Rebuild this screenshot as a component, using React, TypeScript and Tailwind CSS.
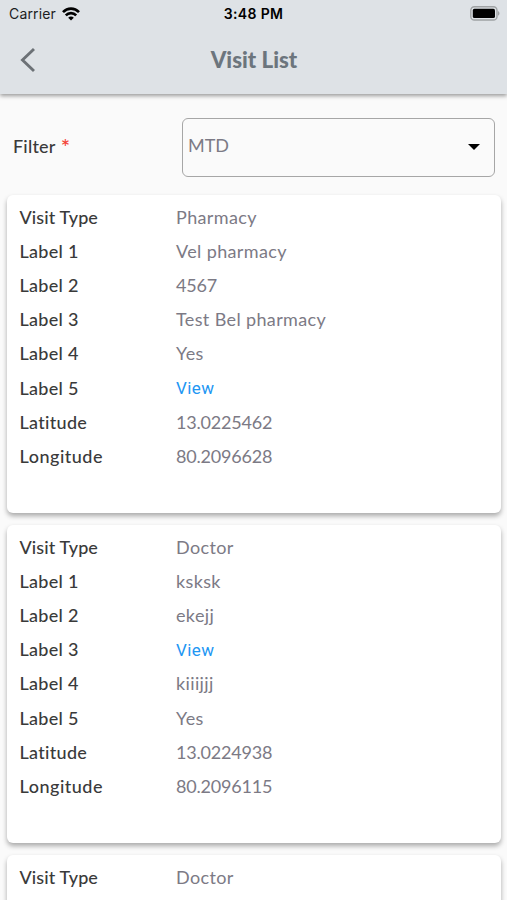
import { clsx } from 'clsx'
import type { JSX } from 'react'

interface VisitField {
  label: string
  value: string
  link?: boolean
}

interface Visit {
  id: number
  fields: readonly VisitField[]
}

const VISITS: readonly Visit[] = [
  {
    id: 1,
    fields: [
      { label: 'Visit Type', value: 'Pharmacy' },
      { label: 'Label 1', value: 'Vel pharmacy' },
      { label: 'Label 2', value: '4567' },
      { label: 'Label 3', value: 'Test Bel pharmacy' },
      { label: 'Label 4', value: 'Yes' },
      { label: 'Label 5', value: 'View', link: true },
      { label: 'Latitude', value: '13.0225462' },
      { label: 'Longitude', value: '80.2096628' },
    ],
  },
  {
    id: 2,
    fields: [
      { label: 'Visit Type', value: 'Doctor' },
      { label: 'Label 1', value: 'ksksk' },
      { label: 'Label 2', value: 'ekejj' },
      { label: 'Label 3', value: 'View', link: true },
      { label: 'Label 4', value: 'kiiijjj' },
      { label: 'Label 5', value: 'Yes' },
      { label: 'Latitude', value: '13.0224938' },
      { label: 'Longitude', value: '80.2096115' },
    ],
  },
  {
    id: 3,
    fields: [{ label: 'Visit Type', value: 'Doctor' }],
  },
]

export default function App(): JSX.Element {
  return (
    <div className="flex h-[900px] w-[507px] flex-col overflow-hidden bg-[#fafafa] font-['Lato',sans-serif]">
      <header className="z-10 h-[94px] shrink-0 bg-[#dee2e6] shadow-[0_2px_4px_rgba(0,0,0,0.38)]">
        <StatusBar />
        <NavBar />
      </header>
      <main className="flex flex-col">
        <FilterRow />
        <ul className="flex flex-col gap-3 pr-[6px] pl-[7px]">
          {VISITS.map((visit) => (
            <VisitCard key={visit.id} visit={visit} />
          ))}
        </ul>
      </main>
    </div>
  )
}

function StatusBar(): JSX.Element {
  return (
    <div className="grid h-[27px] grid-cols-[1fr_80px_1fr] items-center pr-[7px] pl-[9px] font-['Inter',sans-serif] text-black">
      <div className="flex items-center gap-[6px]">
        <span className="text-[14px] tracking-[0.15px] text-[#1c1d1e]">Carrier</span>
        <WifiIcon />
      </div>
      <span className="-ml-[2px] text-center text-[14px] font-semibold tracking-[0.35px] whitespace-nowrap">
        3:48 PM
      </span>
      <div className="flex justify-end">
        <BatteryIcon />
      </div>
    </div>
  )
}

function NavBar(): JSX.Element {
  return (
    <div className="grid h-[67px] grid-cols-[60px_1fr_60px] items-center">
      <button type="button" aria-label="Back" className="-mt-[2px] pl-[20px]">
        <svg width="16" height="26" viewBox="0 0 16 26" fill="none">
          <path d="M14 2 L2.5 13 L14 24" stroke="#6c7176" strokeWidth="2.9" />
        </svg>
      </button>
      <h1 className="-mt-[1px] pl-px text-center text-[22.3px] font-black text-[#6c757d]">Visit List</h1>
    </div>
  )
}

function FilterRow(): JSX.Element {
  return (
    <div className="flex h-[101px] items-start pt-[24px] pr-[12px] pl-[13px]">
      <div className="flex h-[56px] w-[169px] items-center text-[18px] font-medium tracking-[0.2px] text-[#3a3a3a]">
        Filter<span className="ml-[5px] pt-[2px] text-[22px] leading-none text-[#f44336]">*</span>
      </div>
      <button
        type="button"
        className="flex h-[59px] flex-1 items-center justify-between rounded-[6px] border border-[#a6a6a6] pr-[14px] pb-[5px] pl-[5px] text-[18px] text-[#7c7a85]"
      >
        MTD
        <svg width="12" height="6" viewBox="0 0 12 6" className="mt-[3px]">
          <path d="M0 0 H12 L6 6 Z" fill="#000" />
        </svg>
      </button>
    </div>
  )
}

interface VisitCardProps {
  visit: Visit
}

function VisitCard({ visit }: VisitCardProps): JSX.Element {
  return (
    <li className="h-[318px] shrink-0 rounded-[6px] bg-white pt-[5px] pl-[12.5px] shadow-[0_3px_5px_rgba(0,0,0,0.32)]">
      <dl>
        {visit.fields.map((field) => (
          <div key={field.label} className="flex h-[34.2px] items-center text-[18px]">
            <dt
              className={clsx(
                'w-[156.5px] font-medium text-[#3a3a3a]',
                field.label === 'Visit Type' && 'tracking-[0.1px]',
                field.label === 'Longitude' && 'tracking-[0.5px]',
                field.label !== 'Visit Type' && field.label !== 'Longitude' && 'tracking-[0.3px]',
              )}
            >
              {field.label}
            </dt>
            <dd
              className={clsx(
                field.link && "pt-[2px] font-['Roboto',sans-serif] text-[17px] tracking-[0.4px] text-[#2196f3]",
                !field.link && 'text-[#7c7a85]',
                !field.link && (/^\d/.test(field.value) ? 'tracking-[-0.2px]' : 'tracking-[0.37px]'),
              )}
            >
              {field.value}
            </dd>
          </div>
        ))}
      </dl>
    </li>
  )
}

function WifiIcon(): JSX.Element {
  return (
    <svg width="18" height="14" viewBox="0 0 18 14" fill="none" stroke="#000" strokeWidth="2.6">
      <path d="M1 5.2 C5.5 0.4 12.5 0.4 17 5.2" />
      <path d="M3.8 8.3 C6.6 5.4 11.4 5.4 14.2 8.3" />
      <path d="M6.2 10.8 C7.7 9.2 10.3 9.2 11.8 10.8 L9 13.5 Z" fill="#000" stroke="none" />
    </svg>
  )
}

function BatteryIcon(): JSX.Element {
  return (
    <svg width="31" height="15" viewBox="0 0 31 15">
      <rect x="1.8" y="0.8" width="26.2" height="13.2" rx="3.6" fill="none" stroke="#9fa2a4" strokeWidth="1.4" />
      <rect x="3.8" y="2.8" width="22.2" height="9.2" rx="1.6" fill="#000" />
      <path d="M29 5 C31 6 31 8.8 29 9.8 Z" fill="#9fa2a4" />
    </svg>
  )
}
